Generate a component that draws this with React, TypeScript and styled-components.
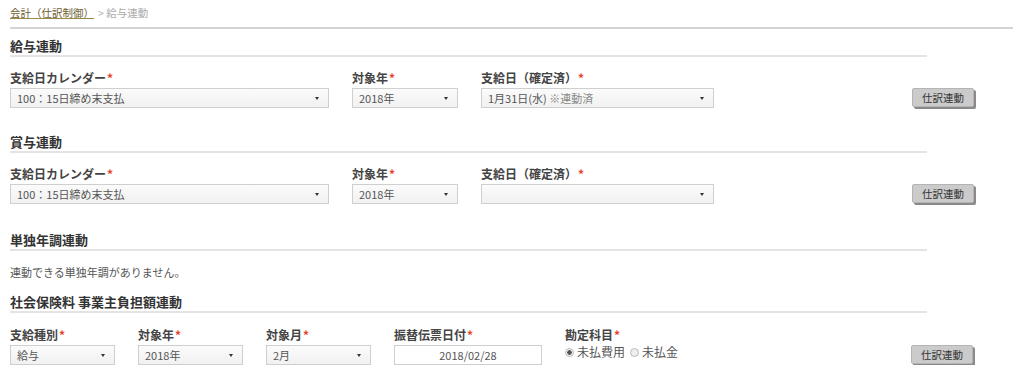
import React from "react";
import styled, { createGlobalStyle } from "styled-components";

const Global = createGlobalStyle`
  html, body { margin: 0; padding: 0; background: #fff; }
  body { font-family: "Noto Sans CJK JP", "Noto Sans", sans-serif; color: #444; }
`;

const Page = styled.div`
  padding: 0 0 0 10px;
  width: 1014px;
  box-sizing: border-box;
`;

const Breadcrumb = styled.div`
  height: 26px;
  line-height: 26px;
  font-size: 10.5px;
  color: #aaa;
  display: flex;
  gap: 4px;
`;

const CrumbLink = styled.a`
  color: #6b5d2e;
  text-decoration: underline;
  text-decoration-color: #9a8a50;
`;

const TopRule = styled.div`
  margin-top: 1px;
  height: 2px;
  width: 1003px;
  background: #d4d4d4;
`;

const Heading = styled.h2<{ $top: number }>`
  margin: ${(p) => p.$top}px 0 0;
  width: 917px;
  font-size: 13px;
  font-weight: bold;
  line-height: 18px;
  color: #333;
  border-bottom: 2px solid #e4e4e4;
`;

const Row = styled.div<{ $top: number }>`
  display: flex;
  align-items: flex-end;
  margin-top: ${(p) => p.$top}px;
`;

const Field = styled.div<{ $w: number; $gap?: number }>`
  width: ${(p) => p.$w}px;
  margin-right: ${(p) => p.$gap ?? 23}px;
  display: flex;
  flex-direction: column;
  gap: 2px;
`;

const Label = styled.div`
  font-size: 12px;
  font-weight: bold;
  line-height: 16px;
  color: #444;
`;

const Req = styled.span`
  color: #e8402a;
  margin-left: 1px;
  font-weight: bold;
`;

const Select = styled.div`
  height: 20px;
  box-sizing: border-box;
  border: 1px solid #cfcfcf;
  background: linear-gradient(#fbfbfb, #f1f1f1);
  display: flex;
  align-items: center;
  justify-content: space-between;
  padding: 0 9px 0 6px;
  font-size: 11px;
  color: #555;
  line-height: 18px;
`;

const Caret = styled.span`
  width: 0;
  height: 0;
  border-left: 2.5px solid transparent;
  border-right: 2.5px solid transparent;
  border-top: 3px solid #333;
`;

const Muted = styled.span`
  color: #888;
`;

const DateInput = styled.div`
  height: 20px;
  box-sizing: border-box;
  border: 1px solid #cfcfcf;
  background: #fff;
  text-align: center;
  font-size: 11px;
  color: #555;
  line-height: 18px;
`;

const Radios = styled.div`
  height: 20px;
  display: flex;
  align-items: flex-start;
  gap: 5px;
  font-size: 12px;
  color: #555;
  line-height: 14px;
`;

const RadioItem = styled.span`
  display: inline-flex;
  align-items: center;
  gap: 3px;
`;

const RadioDot = styled.span<{ $on?: boolean }>`
  width: 9px;
  height: 9px;
  box-sizing: border-box;
  border-radius: 50%;
  border: 1px solid #bbb;
  background: ${(p) => (p.$on ? "radial-gradient(circle, #555 0 2px, #eee 2.5px)" : "#eee")};
`;

const Button = styled.button<{ $left: number }>`
  margin-left: ${(p) => p.$left}px;
  margin-bottom: 1px;
  width: 62px;
  height: 19px;
  padding: 0;
  border: 1px solid #b4b4b4;
  border-radius: 2px;
  background: #cbcbcb;
  box-shadow: 2px 2px 0 #8a8a8a;
  font-family: "Noto Sans CJK JP", sans-serif;
  font-size: 10.5px;
  color: #333;
  line-height: 17px;
`;

const Note = styled.div`
  margin-top: 13px;
  font-size: 11px;
  line-height: 16px;
  color: #555;
`;

const Lbl = ({ children }: { children: React.ReactNode }) => (
  <Label>
    {children}
    <Req>*</Req>
  </Label>
);

const Sel = ({ children }: { children?: React.ReactNode }) => (
  <Select>
    <span>{children}</span>
    <Caret />
  </Select>
);

export default function App() {
  return (
    <Page>
      <Global />
      <Breadcrumb>
        <CrumbLink>会計（仕訳制御）</CrumbLink>
        <span>&gt; 給与連動</span>
      </Breadcrumb>
      <TopRule />

      <Heading $top={8}>給与連動</Heading>
      <Row $top={13}>
        <Field $w={319}>
          <Lbl>支給日カレンダー</Lbl>
          <Sel>100：15日締め末支払</Sel>
        </Field>
        <Field $w={106}>
          <Lbl>対象年</Lbl>
          <Sel>2018年</Sel>
        </Field>
        <Field $w={233} $gap={0}>
          <Lbl>支給日（確定済）</Lbl>
          <Sel>
            1月31日(水) <Muted>※連動済</Muted>
          </Sel>
        </Field>
        <Button $left={198}>仕訳連動</Button>
      </Row>

      <Heading $top={25}>賞与連動</Heading>
      <Row $top={13}>
        <Field $w={319}>
          <Lbl>支給日カレンダー</Lbl>
          <Sel>100：15日締め末支払</Sel>
        </Field>
        <Field $w={106}>
          <Lbl>対象年</Lbl>
          <Sel>2018年</Sel>
        </Field>
        <Field $w={233} $gap={0}>
          <Lbl>支給日（確定済）</Lbl>
          <Sel />
        </Field>
        <Button $left={198}>仕訳連動</Button>
      </Row>

      <Heading $top={27}>単独年調連動</Heading>
      <Note>連動できる単独年調がありません。</Note>

      <Heading $top={13}>社会保険料 事業主負担額連動</Heading>
      <Row $top={14}>
        <Field $w={105} $gap={23}>
          <Lbl>支給種別</Lbl>
          <Sel>給与</Sel>
        </Field>
        <Field $w={105} $gap={23}>
          <Lbl>対象年</Lbl>
          <Sel>2018年</Sel>
        </Field>
        <Field $w={105} $gap={23}>
          <Lbl>対象月</Lbl>
          <Sel>2月</Sel>
        </Field>
        <Field $w={148} $gap={23}>
          <Lbl>振替伝票日付</Lbl>
          <DateInput>2018/02/28</DateInput>
        </Field>
        <Field $w={120} $gap={0}>
          <Lbl>勘定科目</Lbl>
          <Radios>
            <RadioItem>
              <RadioDot $on />
              未払費用
            </RadioItem>
            <RadioItem>
              <RadioDot />
              未払金
            </RadioItem>
          </Radios>
        </Field>
        <Button $left={226}>仕訳連動</Button>
      </Row>
    </Page>
  );
}
